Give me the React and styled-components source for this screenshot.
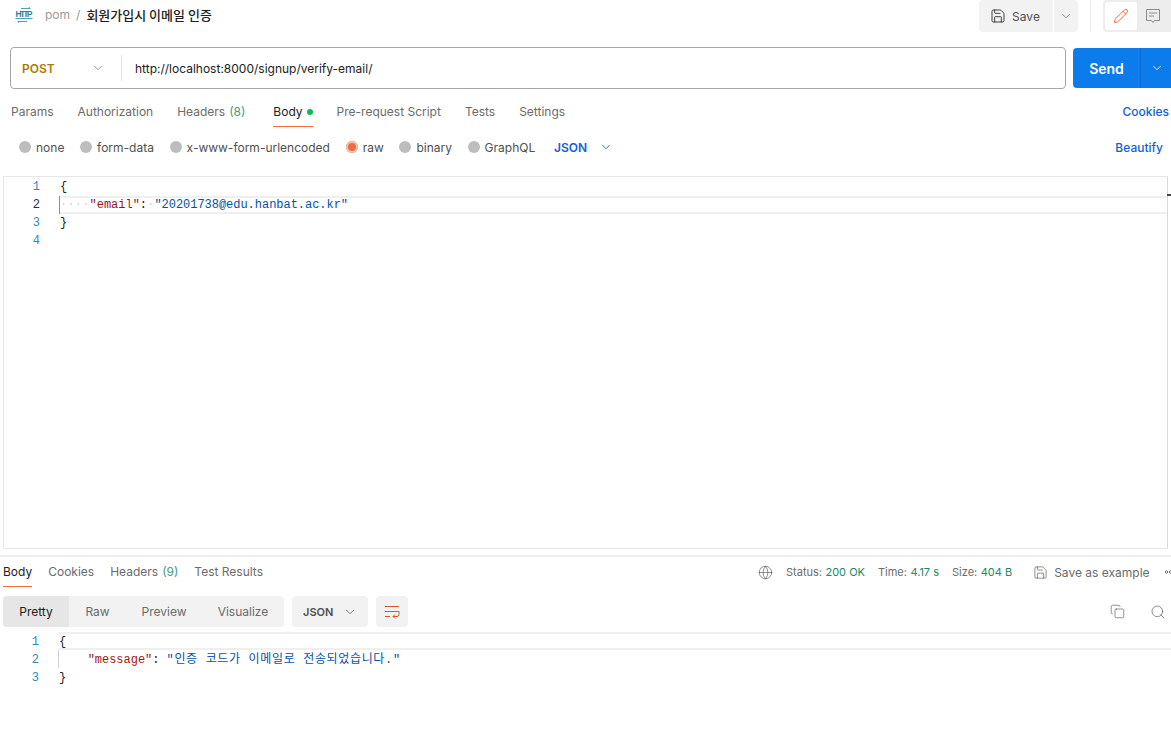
import React from 'react';
import styled, { createGlobalStyle } from 'styled-components';
import { ChevronDown, Save, Pencil, Globe, Copy, Search } from 'lucide-react';

const GlobalStyle = createGlobalStyle`
	html, body {
		margin: 0;
		padding: 0;
		background: #fff;
		overflow: hidden;
	}
	body {
		font-family: Inter, 'Noto Sans CJK KR', sans-serif;
		font-size: 12px;
		color: #212121;
	}
`;

const Page = styled.div`
	width: 1171px;
	height: 734px;
	overflow: hidden;
	display: flex;
	flex-direction: column;
`;

const TitleBar = styled.div`
	height: 32px;
	display: flex;
	align-items: center;
	padding-left: 15px;
`;

const HttpMark = styled.div`
	display: flex;
	padding-bottom: 2px;
`;

const Crumbs = styled.div`
	display: flex;
	align-items: center;
	margin-left: 12px;
	padding-bottom: 3px;
	flex: 1;
	white-space: nowrap;
`;

const CrumbParent = styled.span`
	color: #9a9a9a;
`;

const CrumbSlash = styled.span`
	color: #9a9a9a;
	margin: 0 6px;
`;

const CrumbName = styled.span`
	color: #212121;
	font-family: 'Noto Sans CJK KR', sans-serif;
	font-size: 13px;
	font-weight: 500;
`;

const SaveGroup = styled.div`
	display: flex;
	gap: 1px;
	margin-right: 12px;
`;

const SaveButton = styled.div`
	width: 74px;
	height: 32px;
	padding-right: 2px;
	box-sizing: border-box;
	background: #f2f2f2;
	border-radius: 4px 0 0 4px;
	display: flex;
	align-items: center;
	justify-content: center;
	gap: 6px;
	color: #505050;
`;

const SaveCaret = styled.div`
	width: 24px;
	height: 32px;
	background: #f2f2f2;
	border-radius: 0 4px 4px 0;
	display: flex;
	align-items: center;
	justify-content: center;
	color: #6b6b6b;
`;

const VerticalRule = styled.div`
	width: 1px;
	height: 32px;
	background: #ededed;
	margin-right: 12px;
`;

const ModeSwitch = styled.div`
	width: 68px;
	height: 32px;
	background: #ededed;
	border-radius: 4px 0 0 4px;
	display: flex;
	align-items: center;
	padding-left: 2px;
	box-sizing: border-box;
`;

const ModeButton = styled.div`
	width: 32px;
	height: 28px;
	border-radius: 3px;
	background: ${({ $active }) => ($active ? '#fff' : 'transparent')};
	color: ${({ $active }) => ($active ? '#f26b3a' : '#8a8a8a')};
	display: flex;
	align-items: center;
	justify-content: center;
`;

const UrlRow = styled.div`
	display: flex;
	gap: 7px;
	margin-top: 15px;
	padding: 0 0 0 10px;
`;

const UrlBox = styled.div`
	width: 1056px;
	height: 42px;
	box-sizing: border-box;
	border: 1px solid #a6a6a6;
	border-radius: 4px;
	display: flex;
	align-items: center;
`;

const MethodSelect = styled.div`
	width: 111px;
	height: 26px;
	box-sizing: border-box;
	padding: 0 16px 0 11px;
	display: flex;
	align-items: center;
	justify-content: space-between;
	border-right: 1px solid #e6e6e6;
	color: #ad7a03;
	font-weight: 600;
`;

const UrlText = styled.div`
	padding-left: 13px;
	color: #212121;
`;

const SendGroup = styled.div`
	width: 98px;
	height: 40px;
	margin-top: 1px;
	background: #0c7bec;
	border-radius: 4px 0 0 4px;
	display: flex;
	color: #fff;
`;

const SendLabel = styled.div`
	width: 67px;
	display: flex;
	align-items: center;
	justify-content: center;
	font-size: 14px;
	font-weight: 600;
	border-right: 1px solid #0a6cd3;
`;

const SendCaret = styled.div`
	flex: 1;
	padding-left: 2px;
	display: flex;
	align-items: center;
	justify-content: center;
`;

const RequestTabs = styled.div`
	display: flex;
	align-items: stretch;
	height: 30px;
	margin-top: 8px;
	padding-left: 11px;
	gap: 24px;
`;

const Tab = styled.div`
	display: flex;
	align-items: center;
	gap: 4px;
	margin-right: ${({ $extra }) => $extra || 0}px;
	color: ${({ $active }) => ($active ? '#212121' : '#6b6b6b')};
	border-bottom: 1px solid ${({ $active }) => ($active ? '#f26b3a' : 'transparent')};
	white-space: nowrap;
	box-sizing: border-box;
`;

const Count = styled.span`
	color: #3f9a7e;
`;

const GreenDot = styled.span`
	width: 6px;
	height: 6px;
	border-radius: 50%;
	background: #0cbb52;
`;

const TabLink = styled.div`
	margin-left: auto;
	padding-right: 2px;
	display: flex;
	align-items: center;
	border-bottom: 1px solid transparent;
	color: #0f62d6;
	font-weight: 500;
`;

const BodyTypes = styled.div`
	display: flex;
	align-items: center;
	height: 20px;
	margin-top: 10px;
	padding: 0 8px 0 19px;
	color: #505050;
`;

const RadioItem = styled.div`
	display: flex;
	align-items: center;
	gap: 5px;
	margin-right: 15.7px;
	white-space: nowrap;
`;

const Radio = styled.span`
	width: 12px;
	height: 12px;
	border-radius: 50%;
	background: ${({ $on }) => ($on ? '#f26b3a' : '#bdbdbd')};
	box-shadow: ${({ $on }) => ($on ? 'inset 0 0 0 2px #e4c6bb' : 'none')};
`;

const FormatSelect = styled.div`
	display: flex;
	align-items: center;
	gap: 12px;
	color: #0f62d6;
	font-weight: 600;
	margin-left: 3px;
`;

const BeautifyLink = styled.div`
	margin-left: auto;
	color: #0f62d6;
	font-weight: 500;
`;

const RequestEditor = styled.div`
	margin: 19px 3px 0 3px;
	height: 373px;
	box-sizing: border-box;
	border: 1px solid #e6e6e6;
	border-right-color: #d9d9d9;
	padding-top: 1px;
	position: relative;
`;

const ScrollMark = styled.div`
	position: absolute;
	right: -4px;
	top: 17px;
	width: 4px;
	height: 2px;
	background: #444;
`;

const CodeLine = styled.div`
	display: flex;
	height: 18px;
	line-height: 18px;
	font-family: 'Liberation Mono', 'Noto Sans CJK KR', monospace;
	font-size: 12px;
	letter-spacing: -0.03px;
	white-space: pre;
	box-sizing: border-box;
`;

const LineNumber = styled.span`
	width: 36px;
	flex: none;
	text-align: right;
	color: ${({ $current }) => ($current ? '#1f2a5c' : '#2a8ab8')};
`;

const LineBody = styled.span`
	flex: 1;
	margin-left: 20px;
	box-sizing: border-box;
	${({ $current }) => $current && `
		box-shadow: inset 0 2px 0 #efefef, inset 0 -2px 0 #efefef;
		border-left: 1px solid #8f8f8f;
		margin-left: 19px;
	`}
	${({ $rule }) => $rule && `
		border-left: 1px solid #d0d0d0;
		margin-left: 19px;
	`}
	${({ $head }) => $head && `
		box-shadow: inset 0 2px 0 #efefef, inset 0 -2px 0 #efefef;
	`}
`;

const Dots = styled.span`
	color: #d4d4d4;
	letter-spacing: 0.2px;
`;

const JsonKey = styled.span`
	color: #a31515;
`;

const JsonString = styled.span`
	color: #0451a5;
`;

const KoreanString = styled(JsonString)`
	letter-spacing: 0.65px;
`;

const Divider = styled.div`
	height: 2px;
	background: #efefef;
	margin-top: 6px;
`;

const ResponseHeader = styled.div`
	display: flex;
	align-items: stretch;
	height: 30px;
	padding-left: 3px;
`;

const ResponseTabs = styled.div`
	display: flex;
	gap: 16px;
`;

const ResponseMeta = styled.div`
	margin-left: auto;
	display: flex;
	align-items: center;
	color: #6b6b6b;
	white-space: nowrap;
	overflow: hidden;
	width: 413px;
	flex: none;
`;

const MetaIcon = styled.span`
	display: flex;
	color: #505050;
	margin-right: 13px;
`;

const MetaItem = styled.span`
	font-size: 11px;
	margin-right: 13px;
`;

const MetaValue = styled.span`
	color: #1a8a60;
	margin-left: 3.5px;
`;

const SaveExample = styled.span`
	display: flex;
	align-items: center;
	gap: 6px;
	margin-left: 8px;
	margin-right: 15px;
	& > svg {
		color: #505050;
	}
`;

const MoreMark = styled.span`
	display: flex;
	flex: none;
`;

const ResponseToolbar = styled.div`
	display: flex;
	align-items: center;
	height: 31px;
	margin-top: 9px;
	padding-left: 3px;
`;

const ViewTabs = styled.div`
	display: flex;
	width: 281px;
	height: 31px;
	background: #f2f2f2;
	border-radius: 4px;
	overflow: hidden;
`;

const ViewTab = styled.div`
	flex: ${({ $w }) => `0 0 ${$w}px`};
	display: flex;
	align-items: center;
	justify-content: center;
	background: ${({ $active }) => ($active ? '#e6e6e6' : 'transparent')};
	color: ${({ $active }) => ($active ? '#212121' : '#6b6b6b')};
`;

const LangSelect = styled.div`
	width: 76px;
	height: 31px;
	margin-left: 8px;
	box-sizing: border-box;
	padding: 0 11px;
	background: #f2f2f2;
	border-radius: 4px;
	display: flex;
	align-items: center;
	justify-content: space-between;
	color: #505050;
	font-size: 11px;
	font-weight: 600;
`;

const WrapButton = styled.div`
	width: 32px;
	height: 31px;
	margin-left: 8px;
	background: #f2f2f2;
	border-radius: 4px;
	display: flex;
	align-items: center;
	justify-content: center;
`;

const ToolIcons = styled.div`
	margin-left: auto;
	display: flex;
	align-items: center;
	gap: 25px;
	color: #505050;
	margin-right: 5px;
`;

const ResponseCode = styled.div`
	margin-top: 5px;
	padding-left: 3px;
	${CodeLine} {
		line-height: 20px;
	}
`;

const WrapIcon = () => (
	<svg width="16" height="14" viewBox="0 0 16 14" fill="none" stroke="#d9542b" strokeWidth="1">
		<path d="M1 1.5h14" />
		<path d="M1 6.5h14" />
		<path d="M1 11.5h5" />
		<path d="M15 6.5v3a2 2 0 0 1-2 2H9" />
		<path d="M11 9.5l-2 2 2 2" />
	</svg>
);

const HttpIcon = () => (
	<svg width="18" height="16" viewBox="0 0 18 16" fill="none">
		<path d="M6 1.5h9M13.5 0l2 1.5" stroke="#4ba3b5" strokeWidth="1" />
		<text x="0.5" y="10" fontFamily="'Liberation Sans', sans-serif" fontSize="8.5" fontWeight="700" fill="#2f7f9a" textLength="17">HTTP</text>
		<path d="M0.5 11.5h17" stroke="#4ba3b5" strokeWidth="1" />
		<path d="M3 14.5h9M4.5 16l-2-1.5" stroke="#4ba3b5" strokeWidth="1" />
	</svg>
);

const CommentIcon = () => (
	<svg width="16" height="16" viewBox="0 0 16 16" fill="none" stroke="currentColor" strokeWidth="1">
		<path d="M1.5 1.5h13v11h-5l-1.5 2-1.5-2h-5z" />
		<path d="M4 5h8M4 8h5" />
	</svg>
);

const MoreIcon = () => (
	<svg width="7" height="6" viewBox="0 0 7 6" fill="none" stroke="#6b6b6b" strokeWidth="1">
		<circle cx="1.5" cy="3" r="1.2" />
		<circle cx="5.5" cy="3" r="1.2" />
	</svg>
);

const App = () => {
	return (
		<Page>
			<GlobalStyle />
			<TitleBar>
				<HttpMark><HttpIcon /></HttpMark>
				<Crumbs>
					<CrumbParent>pom</CrumbParent>
					<CrumbSlash>/</CrumbSlash>
					<CrumbName>회원가입시 이메일 인증</CrumbName>
				</Crumbs>
				<SaveGroup>
					<SaveButton><Save size={16} strokeWidth={1.25} color="#212121" />Save</SaveButton>
					<SaveCaret><ChevronDown size={14} strokeWidth={1.25} /></SaveCaret>
				</SaveGroup>
				<VerticalRule />
				<ModeSwitch>
					<ModeButton $active><Pencil size={16} strokeWidth={1.5} /></ModeButton>
					<ModeButton><CommentIcon /></ModeButton>
				</ModeSwitch>
			</TitleBar>

			<UrlRow>
				<UrlBox>
					<MethodSelect>POST<ChevronDown size={14} strokeWidth={1.25} color="#6b6b6b" /></MethodSelect>
					<UrlText>http://localhost:8000/signup/verify-email/</UrlText>
				</UrlBox>
				<SendGroup>
					<SendLabel>Send</SendLabel>
					<SendCaret><ChevronDown size={14} strokeWidth={1.5} /></SendCaret>
				</SendGroup>
			</UrlRow>

			<RequestTabs>
				<Tab>Params</Tab>
				<Tab>Authorization</Tab>
				<Tab $extra={4}>Headers <Count>(8)</Count></Tab>
				<Tab $active>Body<GreenDot /></Tab>
				<Tab>Pre-request Script</Tab>
				<Tab>Tests</Tab>
				<Tab>Settings</Tab>
				<TabLink>Cookies</TabLink>
			</RequestTabs>

			<BodyTypes>
				<RadioItem><Radio />none</RadioItem>
				<RadioItem><Radio />form-data</RadioItem>
				<RadioItem><Radio />x-www-form-urlencoded</RadioItem>
				<RadioItem><Radio $on />raw</RadioItem>
				<RadioItem><Radio />binary</RadioItem>
				<RadioItem><Radio />GraphQL</RadioItem>
				<FormatSelect>JSON<ChevronDown size={14} strokeWidth={1.5} /></FormatSelect>
				<BeautifyLink>Beautify</BeautifyLink>
			</BodyTypes>

			<RequestEditor>
				<ScrollMark />
				<CodeLine><LineNumber>1</LineNumber><LineBody>{'{'}</LineBody></CodeLine>
				<CodeLine>
					<LineNumber $current>2</LineNumber>
					<LineBody $current><Dots>····</Dots><JsonKey>"email"</JsonKey>:<Dots>·</Dots><JsonString>"20201738@edu.hanbat.ac.kr"</JsonString></LineBody>
				</CodeLine>
				<CodeLine><LineNumber>3</LineNumber><LineBody>{'}'}</LineBody></CodeLine>
				<CodeLine><LineNumber>4</LineNumber><LineBody /></CodeLine>
			</RequestEditor>

			<Divider />

			<ResponseHeader>
				<ResponseTabs>
					<Tab $active>Body</Tab>
					<Tab>Cookies</Tab>
					<Tab>Headers <Count>(9)</Count></Tab>
					<Tab>Test Results</Tab>
				</ResponseTabs>
				<ResponseMeta>
					<MetaIcon><Globe size={15} strokeWidth={1} /></MetaIcon>
					<MetaItem>Status:<MetaValue>200 OK</MetaValue></MetaItem>
					<MetaItem>Time:<MetaValue>4.17 s</MetaValue></MetaItem>
					<MetaItem>Size:<MetaValue>404 B</MetaValue></MetaItem>
					<SaveExample><Save size={15} strokeWidth={1} />Save as example</SaveExample>
					<MoreMark><MoreIcon /></MoreMark>
				</ResponseMeta>
			</ResponseHeader>

			<ResponseToolbar>
				<ViewTabs>
					<ViewTab $active $w={66}>Pretty</ViewTab>
					<ViewTab $w={57}>Raw</ViewTab>
					<ViewTab $w={76}>Preview</ViewTab>
					<ViewTab $w={82}>Visualize</ViewTab>
				</ViewTabs>
				<LangSelect>JSON<ChevronDown size={14} strokeWidth={1.25} /></LangSelect>
				<WrapButton><WrapIcon /></WrapButton>
				<ToolIcons>
					<Copy size={15} strokeWidth={1} />
					<Search size={16} strokeWidth={1} />
				</ToolIcons>
			</ResponseToolbar>

			<ResponseCode>
				<CodeLine><LineNumber>1</LineNumber><LineBody $head>{'{'}</LineBody></CodeLine>
				<CodeLine>
					<LineNumber>2</LineNumber>
					<LineBody $rule>{'    '}<JsonKey>"message"</JsonKey>: <KoreanString>"인증 코드가 이메일로 전송되었습니다."</KoreanString></LineBody>
				</CodeLine>
				<CodeLine><LineNumber>3</LineNumber><LineBody>{'}'}</LineBody></CodeLine>
			</ResponseCode>
		</Page>
	);
};

export default App;
